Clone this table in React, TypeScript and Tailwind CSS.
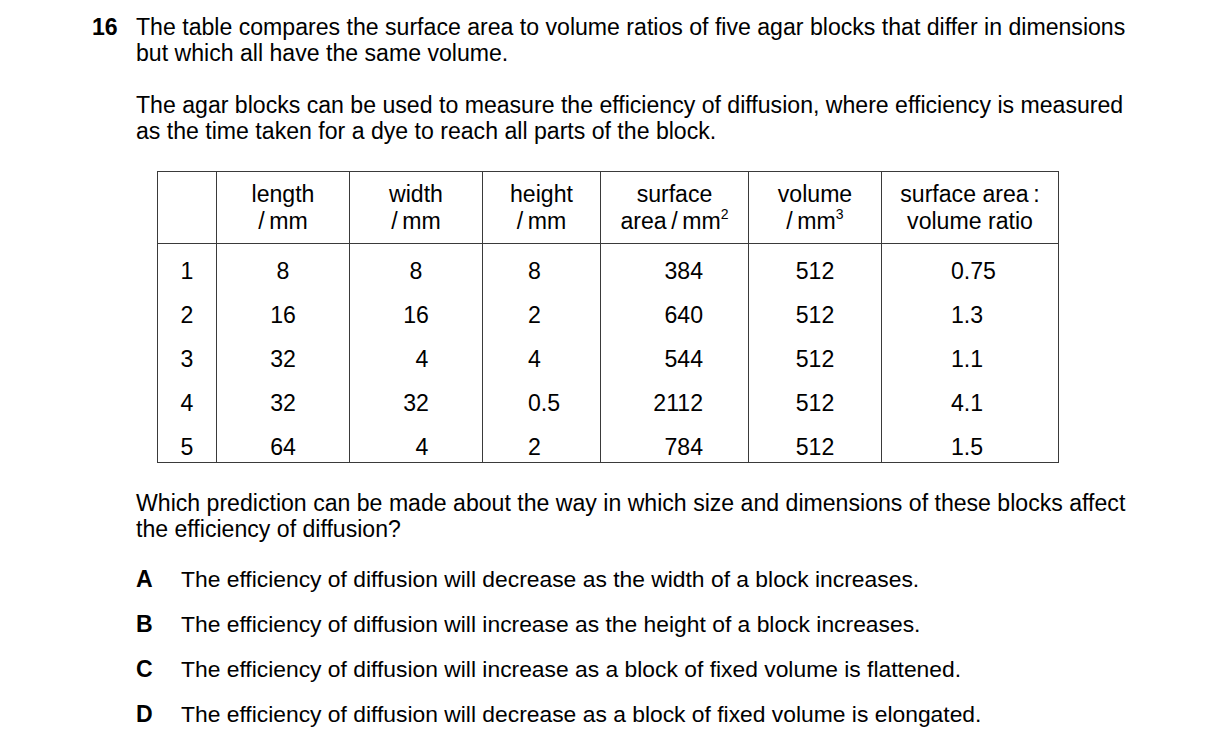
import React from "react";

const colW = ["w-[58px]", "w-[133px]", "w-[133px]", "w-[118px]", "w-[148px]", "w-[133px]", "w-[177px]"];

const rows: string[][] = [
  ["1", "8", "8", "8", "384", "512", "0.75"],
  ["2", "16", "16", "2", "640", "512", "1.3"],
  ["3", "32", "4", "4", "544", "512", "1.1"],
  ["4", "32", "32", "0.5", "2112", "512", "4.1"],
  ["5", "64", "4", "2", "784", "512", "1.5"],
];

function alignFor(ci: number, v: string): string {
  switch (ci) {
    case 2:
      return v === "4" ? "justify-center pl-[12px]" : "justify-center";
    case 3:
      return "justify-start pl-[45px]";
    case 4:
      return "justify-end pr-[45px]";
    case 6:
      return "justify-start pl-[69px]";
    default:
      return "justify-center";
  }
}

function rowPad(ri: number): string {
  if (ri === 0) return "pt-[14px] pb-[18px]";
  if (ri === 4) return "pb-[2px]";
  return "pb-[18px]";
}

export default function App() {
  const headers: React.ReactNode[] = [
    "",
    <>length<br />/&#8201;mm</>,
    <>width<br />/&#8201;mm</>,
    <>height<br />/&#8201;mm</>,
    <>surface<br />area&#8201;/&#8201;mm<sup className="text-[14px] top-[-0.7em]">2</sup></>,
    <>volume<br />/&#8201;mm<sup className="text-[14px] top-[-0.7em]">3</sup></>,
    <>surface area&#8201;:<br />volume ratio</>,
  ];

  return (
    <div
      className="w-[1216px] h-[751px] bg-white text-black overflow-hidden text-[23.1px] leading-[26px]"
      style={{ fontFamily: '"Liberation Sans", Arial, sans-serif' }}
    >
      <div className="pt-[14px] flex">
        <div className="w-[136px] pl-[92px] font-bold">16</div>
        <div className="flex-1">
          <p>
            The table compares the surface area to volume ratios of five agar blocks that differ in dimensions
            <br />
            but which all have the same volume.
          </p>
          <p className="mt-[26px]">
            The agar blocks can be used to measure the efficiency of diffusion, where efficiency is measured
            <br />
            as the time taken for a dye to reach all parts of the block.
          </p>
        </div>
      </div>

      <div className="mt-[27px] ml-[157px] w-[902px] border border-[#3a3a3a]">
        <div className="flex h-[72px] border-b border-[#3a3a3a] leading-[27px]">
          {headers.map((h, i) => (
            <div
              key={i}
              className={`${colW[i]} ${i > 0 ? "border-l border-[#3a3a3a]" : ""} flex items-center justify-center text-center pt-[1px]`}
            >
              <div>{h}</div>
            </div>
          ))}
        </div>
        {rows.map((r, ri) => (
          <div key={ri} className="flex">
            {r.map((v, ci) => (
              <div
                key={ci}
                className={`${colW[ci]} ${ci > 0 ? "border-l border-[#3a3a3a]" : ""} ${rowPad(ri)} flex ${alignFor(ci, v)}`}
              >
                {v}
              </div>
            ))}
          </div>
        ))}
      </div>

      <div className="mt-[27px] pl-[136px]">
        <p>
          Which prediction can be made about the way in which size and dimensions of these blocks affect
          <br />
          the efficiency of diffusion?
        </p>
        <div className="mt-[24px] flex flex-col gap-[19px] text-[22.85px]">
          {[
            ["A", "The efficiency of diffusion will decrease as the width of a block increases."],
            ["B", "The efficiency of diffusion will increase as the height of a block increases."],
            ["C", "The efficiency of diffusion will increase as a block of fixed volume is flattened."],
            ["D", "The efficiency of diffusion will decrease as a block of fixed volume is elongated."],
          ].map(([l, t]) => (
            <div key={l} className="flex">
              <div className="w-[45px] font-bold text-[23.1px]">{l}</div>
              <div>{t}</div>
            </div>
          ))}
        </div>
      </div>
    </div>
  );
}
